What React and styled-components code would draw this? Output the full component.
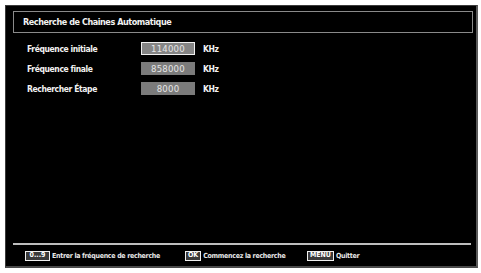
import styled, { createGlobalStyle } from "styled-components";

const GlobalStyle = createGlobalStyle`
  html, body {
    margin: 0;
    padding: 0;
    background: #fff;
  }
  body {
    font-family: "DejaVu Sans Condensed", "DejaVu Sans", sans-serif;
  }
`;

const Page = styled.div`
  width: 481px;
  height: 273px;
  padding: 5px 3px 5px 5px;
  box-sizing: border-box;
`;

const Screen = styled.div`
  height: 263px;
  background: #000;
  border: 1px solid #3a3a3a;
  border-right: 2px solid #5a5a5a;
  border-bottom: 2px solid #4a4a4a;
  box-sizing: border-box;
  display: flex;
  flex-direction: column;
  padding: 5px 3px 0 7px;
`;

const TitleBar = styled.div`
  height: 22px;
  border: 1px solid #8a8a8a;
  box-sizing: border-box;
  display: flex;
  align-items: center;
  padding-left: 9px;
  color: #f2f2f2;
  font-size: 9px;
  letter-spacing: -0.45px;
  font-weight: bold;
`;

const Rows = styled.div`
  display: flex;
  flex-direction: column;
  gap: 7px;
  padding: 9px 0 0 14px;
`;

const Row = styled.div`
  display: grid;
  grid-template-columns: 114px 54px auto;
  align-items: center;
  height: 13px;
  color: #f2f2f2;
  font-size: 8.5px;
  letter-spacing: -0.4px;
  font-weight: bold;
`;

const Value = styled.div`
  height: 13px;
  box-sizing: border-box;
  background: ${({ $active }) => ($active ? "#858585" : "#7b7b7b")};
  border: 1px solid ${({ $active }) => ($active ? "#f0f0f0" : "#7b7b7b")};
  color: #e6e6e6;
  font-size: 9.5px;
  font-weight: normal;
  letter-spacing: 0.2px;
  display: flex;
  align-items: center;
  justify-content: center;
`;

const Unit = styled.span`
  padding-left: 8px;
`;

const Spacer = styled.div`
  flex: 1;
`;

const Separator = styled.div`
  height: 2px;
  background: #bdbdbd;
  margin-right: 2px;
`;

const Footer = styled.div`
  height: 21px;
  display: flex;
  align-items: center;
  padding-left: 12px;
  color: #e8e8e8;
  font-size: 7px;
  letter-spacing: -0.3px;
  font-weight: bold;
  white-space: nowrap;
`;

const Hint = styled.div`
  display: flex;
  align-items: center;
  gap: 2px;
  flex: none;
  width: ${({ $w }) => ($w ? `${$w}px` : "auto")};
`;

const Key = styled.span`
  display: inline-flex;
  align-items: center;
  justify-content: center;
  height: 10px;
  padding: 0 2px;
  min-width: ${({ $min }) => $min || 0}px;
  box-sizing: border-box;
  border: 1px solid #f0f0f0;
  background: #3a3a3a;
  color: #fff;
  font-size: 7px;
  letter-spacing: 0;
  font-weight: bold;
  line-height: 1;
`;

const fields = [
  { label: "Fréquence initiale", value: "114000", active: true },
  { label: "Fréquence finale", value: "858000" },
  { label: "Rechercher Étape", value: "8000" },
];

export default function App() {
  return (
    <>
      <GlobalStyle />
      <Page>
        <Screen>
          <TitleBar>Recherche de Chaines Automatique</TitleBar>
          <Rows>
            {fields.map((f) => (
              <Row key={f.label}>
                <span>{f.label}</span>
                <Value $active={f.active}>{f.value}</Value>
                <Unit>KHz</Unit>
              </Row>
            ))}
          </Rows>
          <Spacer />
          <Separator />
          <Footer>
            <Hint $w={160}>
              <Key $min={25}>0...9</Key>
              Entrer la fréquence de recherche
            </Hint>
            <Hint $w={122}>
              <Key>OK</Key>
              Commencez la recherche
            </Hint>
            <Hint>
              <Key $min={23}>MENU</Key>
              Quitter
            </Hint>
          </Footer>
        </Screen>
      </Page>
    </>
  );
}
